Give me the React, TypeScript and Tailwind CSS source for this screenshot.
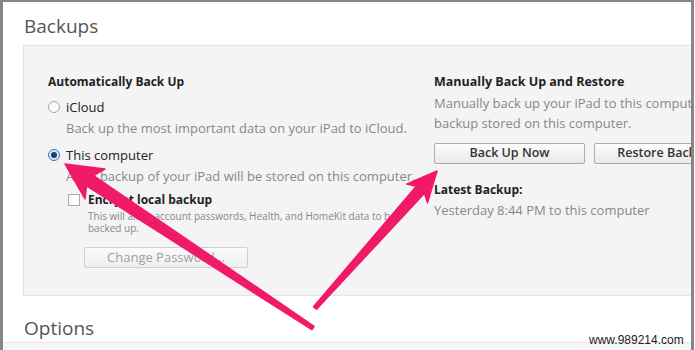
import React from "react";

function Radio({ checked }: { checked?: boolean }) {
  return checked ? (
    <span className="flex h-[12px] w-[12px] items-center justify-center rounded-full border border-[#3f77b5] bg-[#dbe8f6]">
      <span className="h-[6px] w-[6px] rounded-full bg-[#1f3f6e]" />
    </span>
  ) : (
    <span className="h-[12px] w-[12px] rounded-full border border-[#a5a5a5] bg-[#fbfbfb]" />
  );
}

export default function App() {
  return (
    <div className="relative h-[350px] w-[695px] overflow-hidden bg-white font-['Open_Sans',sans-serif]">
      <div className="mr-[1px] flex h-full flex-col overflow-hidden border-l-[3px] border-r-[3px] border-t-2 border-[#868686]">
        <div className="ml-[21px] mt-[9px] h-[30px] text-[19px] leading-[30px] text-[#555]">Backups</div>
        <div className="ml-[20px] mt-[4px] flex h-[251px] whitespace-nowrap border-b border-l border-t border-[#e3e3e3] bg-[#f4f4f4]">
          <div className="flex w-[410px] shrink-0 flex-col pl-[24px] pt-[26px] text-[13px]">
            <div className="h-[20px] text-[12px] font-bold leading-[20px] text-[#222]">Automatically Back Up</div>
            <div className="mt-[5px] flex h-[20px] items-center gap-[6px] leading-[20px] text-[#222]">
              <Radio />
              <span>iCloud</span>
            </div>
            <div className="mt-[1px] h-[20px] pl-[18px] leading-[20px] text-[#888]">
              Back up the most important data on your iPad to iCloud.
            </div>
            <div className="mt-[7px] flex h-[20px] items-center gap-[6px] leading-[20px] text-[#222]">
              <Radio checked />
              <span>This computer</span>
            </div>
            <div className="mt-[1px] h-[20px] pl-[18px] leading-[20px] text-[#888]">
              A full backup of your iPad will be stored on this computer.
            </div>
            <div className="mt-[4px] flex h-[20px] items-center gap-[8px] pl-[20px] leading-[20px]">
              <span className="h-[12px] w-[12px] border border-[#a8a8a8] bg-white" />
              <span className="text-[12px] font-bold text-[#222]">Encrypt local backup</span>
            </div>
            <div className="pl-[40px] text-[10px] leading-[12px] text-[#888]">
              <div>This will allow account passwords, Health, and HomeKit data to be</div>
              <div>backed up.</div>
            </div>
            <div className="ml-[36px] mt-[13px] flex h-[21px] w-[164px] items-center justify-center rounded-[2px] border border-[#d0d0d0] bg-gradient-to-b from-[#fbfbfb] to-[#efefef] text-[13px] text-[#a0a0a0]">
              Change Password...
            </div>
          </div>
          <div className="flex flex-col pt-[26px] text-[13px]">
            <div className="h-[20px] text-[12.5px] font-bold leading-[20px] text-[#222]">Manually Back Up and Restore</div>
            <div className="mt-[1px] h-[20px] leading-[20px] text-[#888]">
              Manually back up your iPad to this computer or restore a
            </div>
            <div className="h-[20px] leading-[20px] text-[#888]">backup stored on this computer.</div>
            <div className="mt-[10px] flex gap-[9px]">
              <div className="flex h-[21px] w-[151px] items-center justify-center rounded-[2px] border border-[#acacac] bg-gradient-to-b from-[#fdfdfd] to-[#e9e9e9] text-[12.5px] font-semibold text-[#333]">
                Back Up Now
              </div>
              <div className="flex h-[21px] w-[151px] items-center justify-center rounded-[2px] border border-[#acacac] bg-gradient-to-b from-[#fdfdfd] to-[#e9e9e9] text-[12.5px] font-semibold text-[#333]">
                Restore Backup...
              </div>
            </div>
            <div className="mt-[16px] h-[20px] text-[12px] font-bold leading-[20px] text-[#222]">Latest Backup:</div>
            <div className="h-[20px] leading-[20px] text-[#888]">Yesterday 8:44 PM to this computer</div>
          </div>
        </div>
        <div className="ml-[21px] mt-[18px] h-[28px] text-[19px] leading-[28px] text-[#555]">Options</div>
        <div className="flex-1 border-t border-[#e6e6e6] bg-[#f6f6f6]" />
      </div>

      <svg className="pointer-events-none absolute left-0 top-0" width="695" height="350" viewBox="0 0 695 350">
        <polygon
          points="65,164 104.9,169 93.5,175.5 314.1,326.3 311.9,329.7 86.5,185.8 85,198.9"
          fill="#f01a68"
          stroke="#f01a68"
          strokeWidth="1.5"
          strokeLinejoin="round"
        />
        <polygon
          points="437,171 427.5,202.7 424.5,193.2 316.5,309.3 313.5,306.7 416.3,186.2 406.6,184.1"
          fill="#f01a68"
          stroke="#f01a68"
          strokeWidth="1.5"
          strokeLinejoin="round"
        />
      </svg>

      <div className="absolute left-[589px] top-[333px] font-['Liberation_Sans',sans-serif] text-[12px] leading-[14px] text-[#222]">
        www.989214.com
      </div>
    </div>
  );
}
